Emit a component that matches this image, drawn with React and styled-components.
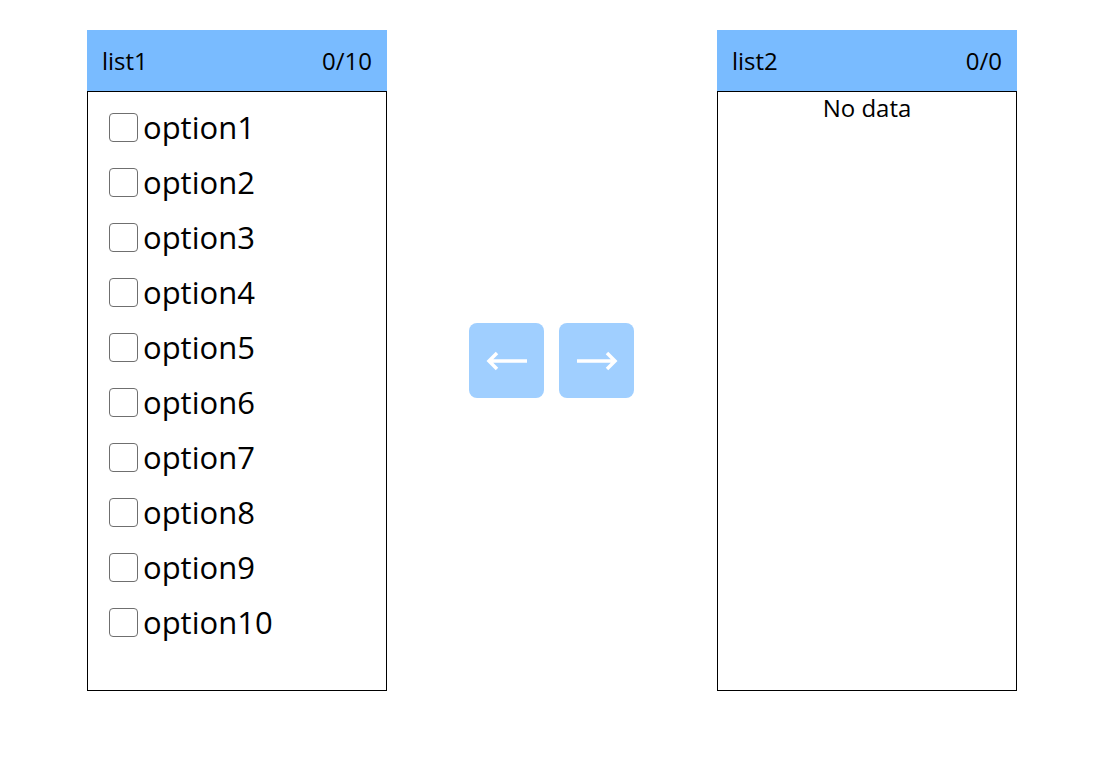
import React from 'react';
import styled, { createGlobalStyle } from 'styled-components';

const GlobalStyle = createGlobalStyle`
  body {
    margin: 0;
    background: #fff;
    font-family: "Open Sans", "Noto Sans", sans-serif;
  }
`;

const Page = styled.div`
  display: flex;
  align-items: center;
  width: 930px;
  padding: 30px 0 0 87px;
`;

const Panel = styled.div`
  display: flex;
  flex-direction: column;
  width: 300px;
`;

const Header = styled.div`
  display: flex;
  justify-content: space-between;
  align-items: center;
  height: 61px;
  padding: 0 15px;
  background: #79bbff;
  font-size: 24px;
  color: #000;
  box-sizing: border-box;
`;

const Body = styled.div`
  height: 600px;
  border: 1px solid #000;
  box-sizing: border-box;
  padding: 21px 0 0 21px;
`;

const Empty = styled.div`
  margin: -21px 0 0 -21px;
  text-align: center;
  font-size: 24px;
  line-height: 32px;
`;

const Row = styled.label`
  display: flex;
  align-items: center;
  height: 29px;
  margin-bottom: 26px;
  font-size: 31px;
  line-height: 29px;
`;

const Box = styled.span`
  flex: none;
  width: 27px;
  height: 27px;
  border: 1px solid #6f6f6f;
  border-radius: 4px;
  background: #fff;
  margin-right: 5px;
`;

const Actions = styled.div`
  display: flex;
  gap: 15px;
  margin: 0 83px 0 82px;
`;

const Button = styled.button`
  width: 75px;
  height: 75px;
  border: none;
  border-radius: 8px;
  background: #a0cfff;
  display: flex;
  align-items: center;
  justify-content: center;
  padding: 0;
`;

const Arrow = ({ left }) => (
  <svg width="44" height="22" viewBox="0 0 44 22">
    {left ? (
      <path d="M42 11H4M12 3l-8 8 8 8" stroke="#fff" strokeWidth="3.5" fill="none" />
    ) : (
      <path d="M2 11h38M32 3l8 8-8 8" stroke="#fff" strokeWidth="3.5" fill="none" />
    )}
  </svg>
);

const options = Array.from({ length: 10 }, (_, i) => `option${i + 1}`);

const App = () => (
  <>
    <GlobalStyle />
    <Page>
      <Panel>
        <Header>
          <span>list1</span>
          <span>0/10</span>
        </Header>
        <Body>
          {options.map((o) => (
            <Row key={o}>
              <Box />
              {o}
            </Row>
          ))}
        </Body>
      </Panel>
      <Actions>
        <Button><Arrow left /></Button>
        <Button><Arrow /></Button>
      </Actions>
      <Panel>
        <Header>
          <span>list2</span>
          <span>0/0</span>
        </Header>
        <Body>
          <Empty>No data</Empty>
        </Body>
      </Panel>
    </Page>
  </>
);

export default App;
